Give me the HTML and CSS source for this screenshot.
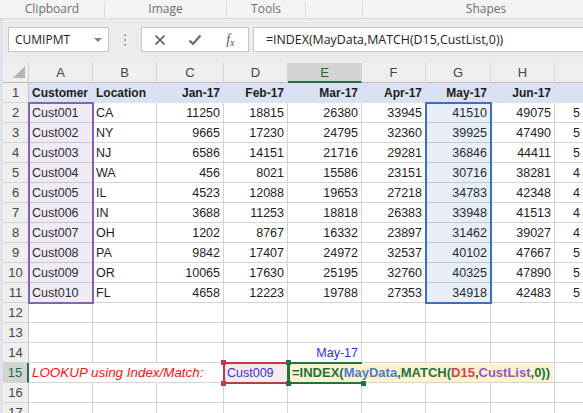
FILE: index.html
```html
<!DOCTYPE html>
<html>
<head>
<meta charset="utf-8">
<link rel="stylesheet" href="styles.css">
</head>
<body>
<div class="ribbon">
  <div class="grp g1">Clipboard</div>
  <div class="grp g2">Image</div>
  <div class="grp g3">Tools</div>
  <div class="grp g4"></div>
  <div class="grp g5">Shapes</div>
</div>
<div class="main">
  <div class="fbar">
    <div class="namebox"><span>CUMIPMT</span><span class="arrow"></span></div>
    <div class="dots"><i></i><i></i><i></i></div>
    <div class="btns">
      <div class="btn"><svg width="12" height="12" viewBox="0 0 12 12"><path d="M1.5 1.5 L10.5 10.5 M10.5 1.5 L1.5 10.5" stroke="#555" stroke-width="1.6" fill="none"/></svg></div>
      <div class="btn"><svg width="14" height="12" viewBox="0 0 14 12"><path d="M1.5 6.5 L5 10 L12.5 1.5" stroke="#6a6a6a" stroke-width="2.2" fill="none"/></svg></div>
      <div class="btn fx"><i>f</i><span>x</span></div>
    </div>
    <div class="finput">=INDEX(MayData,MATCH(D15,CustList,0))</div>
  </div>
  <div class="sheetwrap">
  <div class="sheet">
    <div class="corner"><svg width="13" height="13" viewBox="0 0 13 13"><polygon points="12,0 12,12 0,12" fill="#b5b5b5"/></svg></div>
    <div class="ch">A</div><div class="ch">B</div><div class="ch">C</div><div class="ch">D</div><div class="ch sel">E</div><div class="ch">F</div><div class="ch">G</div><div class="ch">H</div><div class="ch chi"></div>

    <div class="rh">1</div><div class="c r1">Customer</div><div class="c r1">Location</div><div class="c r1 n">Jan-17</div><div class="c r1 n">Feb-17</div><div class="c r1 n">Mar-17</div><div class="c r1 n">Apr-17</div><div class="c r1 n">May-17</div><div class="c r1 n">Jun-17</div><div class="c r1 ci"></div>

    <div class="rh">2</div><div class="c">Cust001</div><div class="c">CA</div><div class="c n">11250</div><div class="c n">18815</div><div class="c n">26380</div><div class="c n">33945</div><div class="c n">41510</div><div class="c n">49075</div><div class="c ci"><span>56640</span></div>
    <div class="rh">3</div><div class="c">Cust002</div><div class="c">NY</div><div class="c n">9665</div><div class="c n">17230</div><div class="c n">24795</div><div class="c n">32360</div><div class="c n">39925</div><div class="c n">47490</div><div class="c ci"><span>55055</span></div>
    <div class="rh">4</div><div class="c">Cust003</div><div class="c">NJ</div><div class="c n">6586</div><div class="c n">14151</div><div class="c n">21716</div><div class="c n">29281</div><div class="c n">36846</div><div class="c n">44411</div><div class="c ci"><span>51976</span></div>
    <div class="rh">5</div><div class="c">Cust004</div><div class="c">WA</div><div class="c n">456</div><div class="c n">8021</div><div class="c n">15586</div><div class="c n">23151</div><div class="c n">30716</div><div class="c n">38281</div><div class="c ci"><span>45846</span></div>
    <div class="rh">6</div><div class="c">Cust005</div><div class="c">IL</div><div class="c n">4523</div><div class="c n">12088</div><div class="c n">19653</div><div class="c n">27218</div><div class="c n">34783</div><div class="c n">42348</div><div class="c ci"><span>49913</span></div>
    <div class="rh">7</div><div class="c">Cust006</div><div class="c">IN</div><div class="c n">3688</div><div class="c n">11253</div><div class="c n">18818</div><div class="c n">26383</div><div class="c n">33948</div><div class="c n">41513</div><div class="c ci"><span>49078</span></div>
    <div class="rh">8</div><div class="c">Cust007</div><div class="c">OH</div><div class="c n">1202</div><div class="c n">8767</div><div class="c n">16332</div><div class="c n">23897</div><div class="c n">31462</div><div class="c n">39027</div><div class="c ci"><span>46592</span></div>
    <div class="rh">9</div><div class="c">Cust008</div><div class="c">PA</div><div class="c n">9842</div><div class="c n">17407</div><div class="c n">24972</div><div class="c n">32537</div><div class="c n">40102</div><div class="c n">47667</div><div class="c ci"><span>55232</span></div>
    <div class="rh">10</div><div class="c">Cust009</div><div class="c">OR</div><div class="c n">10065</div><div class="c n">17630</div><div class="c n">25195</div><div class="c n">32760</div><div class="c n">40325</div><div class="c n">47890</div><div class="c ci"><span>55455</span></div>
    <div class="rh">11</div><div class="c">Cust010</div><div class="c">FL</div><div class="c n">4658</div><div class="c n">12223</div><div class="c n">19788</div><div class="c n">27353</div><div class="c n">34918</div><div class="c n">42483</div><div class="c ci"><span>50048</span></div>
    <div class="rh">12</div><div class="c"></div><div class="c"></div><div class="c"></div><div class="c"></div><div class="c"></div><div class="c"></div><div class="c"></div><div class="c"></div><div class="c ci"></div>
    <div class="rh">13</div><div class="c"></div><div class="c"></div><div class="c"></div><div class="c"></div><div class="c"></div><div class="c"></div><div class="c"></div><div class="c"></div><div class="c ci"></div>
    <div class="rh">14</div><div class="c"></div><div class="c"></div><div class="c"></div><div class="c"></div><div class="c n blue">May-17</div><div class="c"></div><div class="c"></div><div class="c"></div><div class="c ci"></div>
    <div class="rh sel">15</div><div class="c lookup">LOOKUP using Index/Match:</div><div class="c nr"></div><div class="c"></div><div class="c blue">Cust009</div><div class="c"></div><div class="c"></div><div class="c"></div><div class="c"></div><div class="c ci"></div>
    <div class="rh">16</div><div class="c"></div><div class="c"></div><div class="c"></div><div class="c"></div><div class="c"></div><div class="c"></div><div class="c"></div><div class="c"></div><div class="c ci"></div>
    <div class="rh">17</div><div class="c"></div><div class="c"></div><div class="c"></div><div class="c"></div><div class="c"></div><div class="c"></div><div class="c"></div><div class="c"></div><div class="c ci"></div>
  </div>
  <div class="overlay">
    <div class="rng rng-a"></div>
    <div class="rng rng-g"></div>
    <div class="rng rng-d"><i class="hdl tl"></i><i class="hdl tr"></i><i class="hdl bl"></i><i class="hdl br"></i></div>
    <div class="edit-fill"><span class="fg">=INDEX(</span><span class="fb">MayData</span><span class="fg">,MATCH(</span><span class="fr">D15</span><span class="fg">,</span><span class="fp">CustList</span><span class="fg">,0))</span></div>
    <div class="edit-box"><i class="ghdl tl"></i><i class="ghdl bl"></i><i class="ghdl br"></i></div>
  </div>
  </div>
</div>
</body>
</html>
```
FILE: styles.css
```css
* { box-sizing: border-box; }
html, body { margin: 0; padding: 0; }
body {
  width: 583px;
  height: 413px;
  overflow: hidden;
  background: #e4e8ee;
  font-family: "Liberation Sans", Arial, sans-serif;
}

/* ribbon group labels */
.ribbon {
  display: flex;
  align-items: center;
  height: 19px;
  background: #f3f3f3;
  border-bottom: 1px solid #dadada;
  font-family: "Open Sans", "Liberation Sans", sans-serif;
  font-size: 12px;
  color: #6e6e6e;
}
.grp {
  flex: none;
  height: 16px;
  line-height: 16px;
  text-align: center;
  border-right: 1px solid #dcdcdc;
}
.g1 { width: 105px; }
.g2 { width: 122px; }
.g3 { width: 79px; }
.g4 { width: 57px; }
.g5 { width: 246px; border-right: none; }

/* main area with left strip */
.main {
  padding-left: 3px;
  background: #dfe4eb;
}

/* formula bar */
.fbar {
  height: 44px;
  display: flex;
  align-items: flex-start;
  padding: 8px 0 0 5px;
  background: #ececec;
  font-family: "Open Sans", "Liberation Sans", sans-serif;
  font-size: 12px;
  color: #222;
}
.namebox {
  flex: none;
  width: 101px;
  height: 25px;
  display: flex;
  align-items: center;
  padding-left: 6px;
  background: #fff;
  border: 1px solid #c6c6c6;
}
.arrow {
  margin-left: auto;
  margin-right: 6px;
  width: 0;
  height: 0;
  border-left: 4px solid transparent;
  border-right: 4px solid transparent;
  border-top: 4px solid #808080;
}
.dots {
  flex: none;
  width: 32px;
  height: 25px;
  display: flex;
  flex-direction: column;
  align-items: center;
  justify-content: center;
  gap: 3px;
}
.dots i {
  display: block;
  width: 2px;
  height: 2px;
  background: #a8a8a8;
}
.btns {
  flex: none;
  width: 108px;
  height: 25px;
  display: flex;
  background: #fff;
  border: 1px solid #c6c6c6;
}
.btn {
  flex: 1;
  display: flex;
  align-items: center;
  justify-content: center;
}
.fx {
  font-family: "Liberation Serif", serif;
  color: #555;
  font-size: 14px;
}
.fx i { font-style: italic; }
.fx span { font-size: 10px; font-style: italic; margin-top: 5px; }
.finput {
  flex: 1;
  height: 25px;
  margin-left: 4px;
  margin-right: -4px;
  line-height: 23px;
  padding-left: 12px;
  background: #fff;
  border: 1px solid #c6c6c6;
  white-space: nowrap;
  font-size: 12.4px;
}

/* sheet grid + overlay grid stacked in one cell */
.sheetwrap {
  display: grid;
  width: 580px;
  overflow: hidden;
}
.sheet, .overlay {
  grid-area: 1 / 1;
  display: grid;
  grid-template-columns: 26px 64px 64px 67px 64px 74px 64px 65px 64px 28px;
  grid-template-rows: repeat(18, 20px);
}
.sheet { background: #fff; }
.overlay { pointer-events: none; z-index: 2; }

.corner {
  background: #efefef;
  border-right: 1px solid #d0d0d0;
  border-bottom: 1px solid #bdbdbd;
  padding: 3px 0 0 10px;
}
.corner svg { display: block; }
.ch {
  background: #efefef;
  border-right: 1px solid #d6d6d6;
  border-bottom: 1px solid #bdbdbd;
  text-align: center;
  line-height: 19px;
  font-size: 13px;
  color: #444;
}
.ch.chi { border-right: none; }
.ch.sel {
  background: #d3d3d3;
  color: #1e6b40;
  border-bottom: 2px solid #217346;
}
.rh {
  background: #efefef;
  border-right: 1px solid #c4c4c4;
  border-bottom: 1px solid #d6d6d6;
  text-align: center;
  line-height: 19px;
  font-size: 13px;
  color: #444;
}
.rh.sel {
  background: #d3d3d3;
  color: #1e6b40;
  border-right: 2px solid #217346;
}
.c {
  border-right: 1px solid #d4d4d4;
  border-bottom: 1px solid #d4d4d4;
  padding: 0 3px;
  line-height: 20px;
  font-size: 12.5px;
  color: #1e1e1e;
  white-space: nowrap;
  overflow: hidden;
}
.c.ci {
  border-right: none;
  padding: 0 0 0 18px;
}
.ci span {
  display: inline-block;
  width: 7px;
  overflow: hidden;
  vertical-align: top;
}
.n { text-align: right; }
.r1 {
  background: #d9e1f2;
  border-right-color: #d9e1f2;
  border-bottom-color: #d9e1f2;
  font-weight: bold;
  font-size: 12px;
}
.blue { color: #2b2bf2; }
.lookup {
  overflow: visible;
  border-right-color: #fff;
  color: #ff1010;
  font-style: italic;
  font-size: 13.4px;
  position: relative;
  z-index: 1;
}
.nr { border-right-color: #fff; }

/* range highlights */
.rng {
  margin: -1px;
  border: 2px solid;
  position: relative;
}
.rng-a {
  grid-column: 2;
  grid-row: 3 / 13;
  border-color: #8462b8;
  background: rgba(128, 96, 184, 0.12);
}
.rng-g {
  grid-column: 8;
  grid-row: 3 / 13;
  border-color: #3b6fc4;
  background: rgba(59, 111, 196, 0.11);
}
.rng-d {
  grid-column: 5;
  grid-row: 16;
  border-color: #be3a44;
  background: rgba(200, 60, 70, 0.1);
}
.hdl {
  position: absolute;
  width: 5px;
  height: 5px;
  background: #be3a44;
}
.hdl.tl, .ghdl.tl { left: -4px; top: -4px; }
.hdl.tr { right: -4px; top: -4px; }
.hdl.bl, .ghdl.bl { left: -4px; bottom: -4px; }
.hdl.br, .ghdl.br { right: -4px; bottom: -4px; }

/* cell in edit mode */
.edit-fill {
  grid-column: 6 / 10;
  grid-row: 16;
  margin: 1px 2px 1px 1px;
  padding-left: 3px;
  background: #fff2cc;
  line-height: 18px;
  font-weight: bold;
  font-size: 13px;
  white-space: nowrap;
}
.fg { color: #1e7145; }
.fb { color: #4a7ccb; }
.fr { color: #d0454f; }
.fp { color: #8a5cc4; }
.edit-box {
  grid-column: 6;
  grid-row: 16;
  margin: -1px 0 -1px -1px;
  border-top: 2px solid #217346;
  border-left: 3px solid #217346;
  border-bottom: 2px solid #217346;
  position: relative;
}
.ghdl {
  position: absolute;
  width: 5px;
  height: 5px;
  background: #217346;
}
```
